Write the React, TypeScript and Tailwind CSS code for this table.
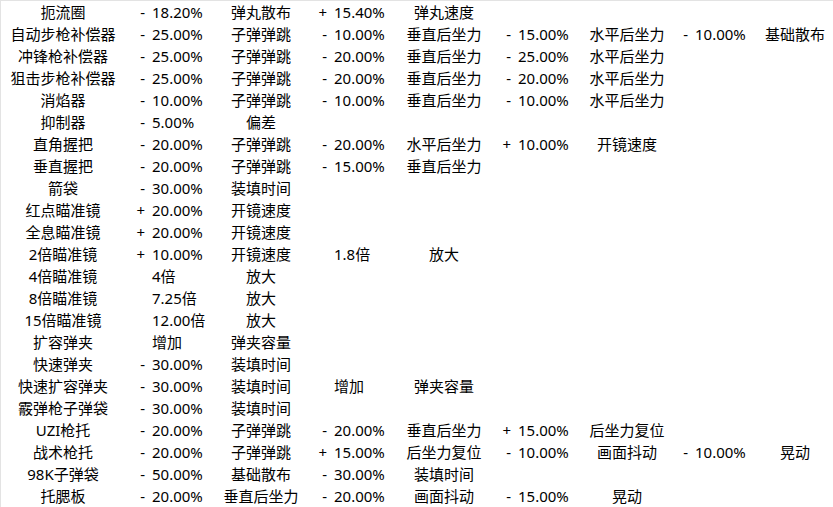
type Val = [string, string]
type Pair = { v: Val; a: string }
interface Row {
  name: string
  pairs: Pair[]
}

const p = (s: string, n: string, a: string): Pair => ({ v: [s, n], a })

const rows: Row[] = [
  { name: '扼流圈', pairs: [p('-', '18.20%', '弹丸散布'), p('+', '15.40%', '弹丸速度')] },
  { name: '自动步枪补偿器', pairs: [p('-', '25.00%', '子弹弹跳'), p('-', '10.00%', '垂直后坐力'), p('-', '15.00%', '水平后坐力'), p('-', '10.00%', '基础散布')] },
  { name: '冲锋枪补偿器', pairs: [p('-', '25.00%', '子弹弹跳'), p('-', '20.00%', '垂直后坐力'), p('-', '25.00%', '水平后坐力')] },
  { name: '狙击步枪补偿器', pairs: [p('-', '25.00%', '子弹弹跳'), p('-', '20.00%', '垂直后坐力'), p('-', '20.00%', '水平后坐力')] },
  { name: '消焰器', pairs: [p('-', '10.00%', '子弹弹跳'), p('-', '10.00%', '垂直后坐力'), p('-', '10.00%', '水平后坐力')] },
  { name: '抑制器', pairs: [p('-', '5.00%', '偏差')] },
  { name: '直角握把', pairs: [p('-', '20.00%', '子弹弹跳'), p('-', '20.00%', '水平后坐力'), p('+', '10.00%', '开镜速度')] },
  { name: '垂直握把', pairs: [p('-', '20.00%', '子弹弹跳'), p('-', '15.00%', '垂直后坐力')] },
  { name: '箭袋', pairs: [p('-', '30.00%', '装填时间')] },
  { name: '红点瞄准镜', pairs: [p('+', '20.00%', '开镜速度')] },
  { name: '全息瞄准镜', pairs: [p('+', '20.00%', '开镜速度')] },
  { name: '2倍瞄准镜', pairs: [p('+', '10.00%', '开镜速度'), p('', '1.8倍', '放大')] },
  { name: '4倍瞄准镜', pairs: [p('', '4倍', '放大')] },
  { name: '8倍瞄准镜', pairs: [p('', '7.25倍', '放大')] },
  { name: '15倍瞄准镜', pairs: [p('', '12.00倍', '放大')] },
  { name: '扩容弹夹', pairs: [p('', '增加', '弹夹容量')] },
  { name: '快速弹夹', pairs: [p('-', '30.00%', '装填时间')] },
  { name: '快速扩容弹夹', pairs: [p('-', '30.00%', '装填时间'), p('', '增加', '弹夹容量')] },
  { name: '霰弹枪子弹袋', pairs: [p('-', '30.00%', '装填时间')] },
  { name: 'UZI枪托', pairs: [p('-', '20.00%', '子弹弹跳'), p('-', '20.00%', '垂直后坐力'), p('+', '15.00%', '后坐力复位')] },
  { name: '战术枪托', pairs: [p('-', '20.00%', '子弹弹跳'), p('+', '15.00%', '后坐力复位'), p('-', '10.00%', '画面抖动'), p('-', '10.00%', '晃动')] },
  { name: '98K子弹袋', pairs: [p('-', '50.00%', '基础散布'), p('-', '30.00%', '装填时间')] },
  { name: '托腮板', pairs: [p('-', '20.00%', '垂直后坐力'), p('-', '20.00%', '画面抖动'), p('-', '15.00%', '晃动')] },
]

export default function App() {
  return (
    <div
      className="w-[833px] h-[507px] overflow-hidden bg-white text-black border-t border-l border-[#e3e3e3] text-[15px] leading-[22px]"
      style={{ fontFamily: '"Noto Sans", "Noto Sans CJK SC", sans-serif' }}
    >
      {rows.map((r) => (
        <div
          key={r.name}
          className="grid grid-cols-[124px_27px_70px_78px_34px_71px_78px_35px_70px_78px_29px_62px_76px] h-[22px] whitespace-nowrap"
        >
          <div className="text-center">{r.name}</div>
          {[0, 1, 2, 3].map((i) => {
            const pr = r.pairs[i]
            return [
              <div key={`s${i}`} className="text-right pr-[7px]">{pr ? pr.v[0] : ''}</div>,
              <div key={`n${i}`}>{pr ? pr.v[1] : ''}</div>,
              <div key={`a${i}`} className="text-center">{pr ? pr.a : ''}</div>,
            ]
          })}
        </div>
      ))}
    </div>
  )
}
